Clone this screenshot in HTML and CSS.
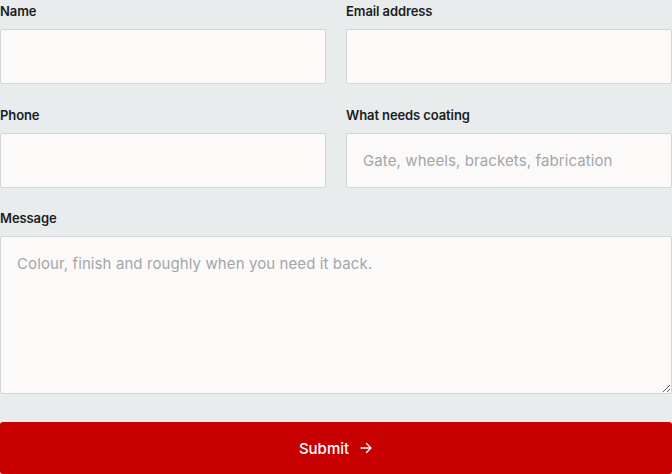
FILE: index.html
```html
<!DOCTYPE html>
<html lang="en">
<head>
    <meta charset="UTF-8">
    <meta name="viewport" content="width=device-width, initial-scale=1.0">
    <title>Quote request</title>
    <link rel="stylesheet" href="styles.css">
</head>
<body>
    <form class="quote-form">
        <div class="form-row">
            <div class="form-group">
                <label for="name">Name</label>
                <input type="text" id="name">
            </div>
            <div class="form-group">
                <label for="email">Email address</label>
                <input type="email" id="email">
            </div>
        </div>

        <div class="form-row">
            <div class="form-group">
                <label for="phone">Phone</label>
                <input type="tel" id="phone">
            </div>
            <div class="form-group">
                <label for="item">What needs coating</label>
                <input type="text" id="item" placeholder="Gate, wheels, brackets, fabrication">
            </div>
        </div>

        <div class="form-group message-group">
            <label for="message">Message</label>
            <textarea id="message" placeholder="Colour, finish and roughly when you need it back."></textarea>
        </div>

        <button type="submit" class="submit-btn">
            Submit
            <svg width="14" height="14" viewBox="0 0 14 14" fill="none" stroke="currentColor" stroke-width="1.4" stroke-linecap="round" stroke-linejoin="round">
                <path d="M2 7h10M7.5 2.5 12 7l-4.5 4.5"/>
            </svg>
        </button>
    </form>
</body>
</html>
```

FILE: styles.css
```css
:root {
    --page-bg: #e8eced;
    --field-bg: #fbfaf9;
    --field-border: #d3d5d6;
    --text-dark: #1b1d1f;
    --placeholder: #a3a6a8;
    --brand-red: #c70000;
}

* {
    margin: 0;
    padding: 0;
    box-sizing: border-box;
}

body {
    background-color: var(--page-bg);
    font-family: Inter, "Liberation Sans", sans-serif;
    color: var(--text-dark);
}

.quote-form {
    display: flex;
    flex-direction: column;
    gap: 20px;
}

.form-row {
    display: grid;
    grid-template-columns: 1fr 1fr;
    gap: 20px;
}

.message-group {
    margin-top: -1px;
}

.form-group label {
    display: block;
    height: 29px;
    padding-top: 3px;
    font-size: 13px;
    font-weight: 600;
    letter-spacing: -0.1px;
}

.form-group input,
.form-group textarea {
    display: block;
    width: 100%;
    height: 55px;
    padding: 0 16px;
    background-color: var(--field-bg);
    border: 1px solid var(--field-border);
    border-radius: 2px;
    font-family: inherit;
    font-size: 15px;
    letter-spacing: 0.1px;
    color: var(--text-dark);
}

.form-group textarea {
    height: 158px;
    padding: 15px 16px;
    line-height: 24px;
    resize: vertical;
}

.form-group input::placeholder,
.form-group textarea::placeholder {
    color: var(--placeholder);
}

.form-group input:focus,
.form-group textarea:focus {
    outline: none;
    border-color: var(--brand-red);
}

.submit-btn {
    margin-top: 8px;
    height: 52px;
    width: 100%;
    display: flex;
    align-items: center;
    justify-content: center;
    gap: 10px;
    background-color: var(--brand-red);
    color: #ffffff;
    border: none;
    border-radius: 3px;
    font-family: inherit;
    font-size: 15px;
    font-weight: 500;
    cursor: pointer;
}

.submit-btn:hover {
    background-color: #a80000;
}
```
